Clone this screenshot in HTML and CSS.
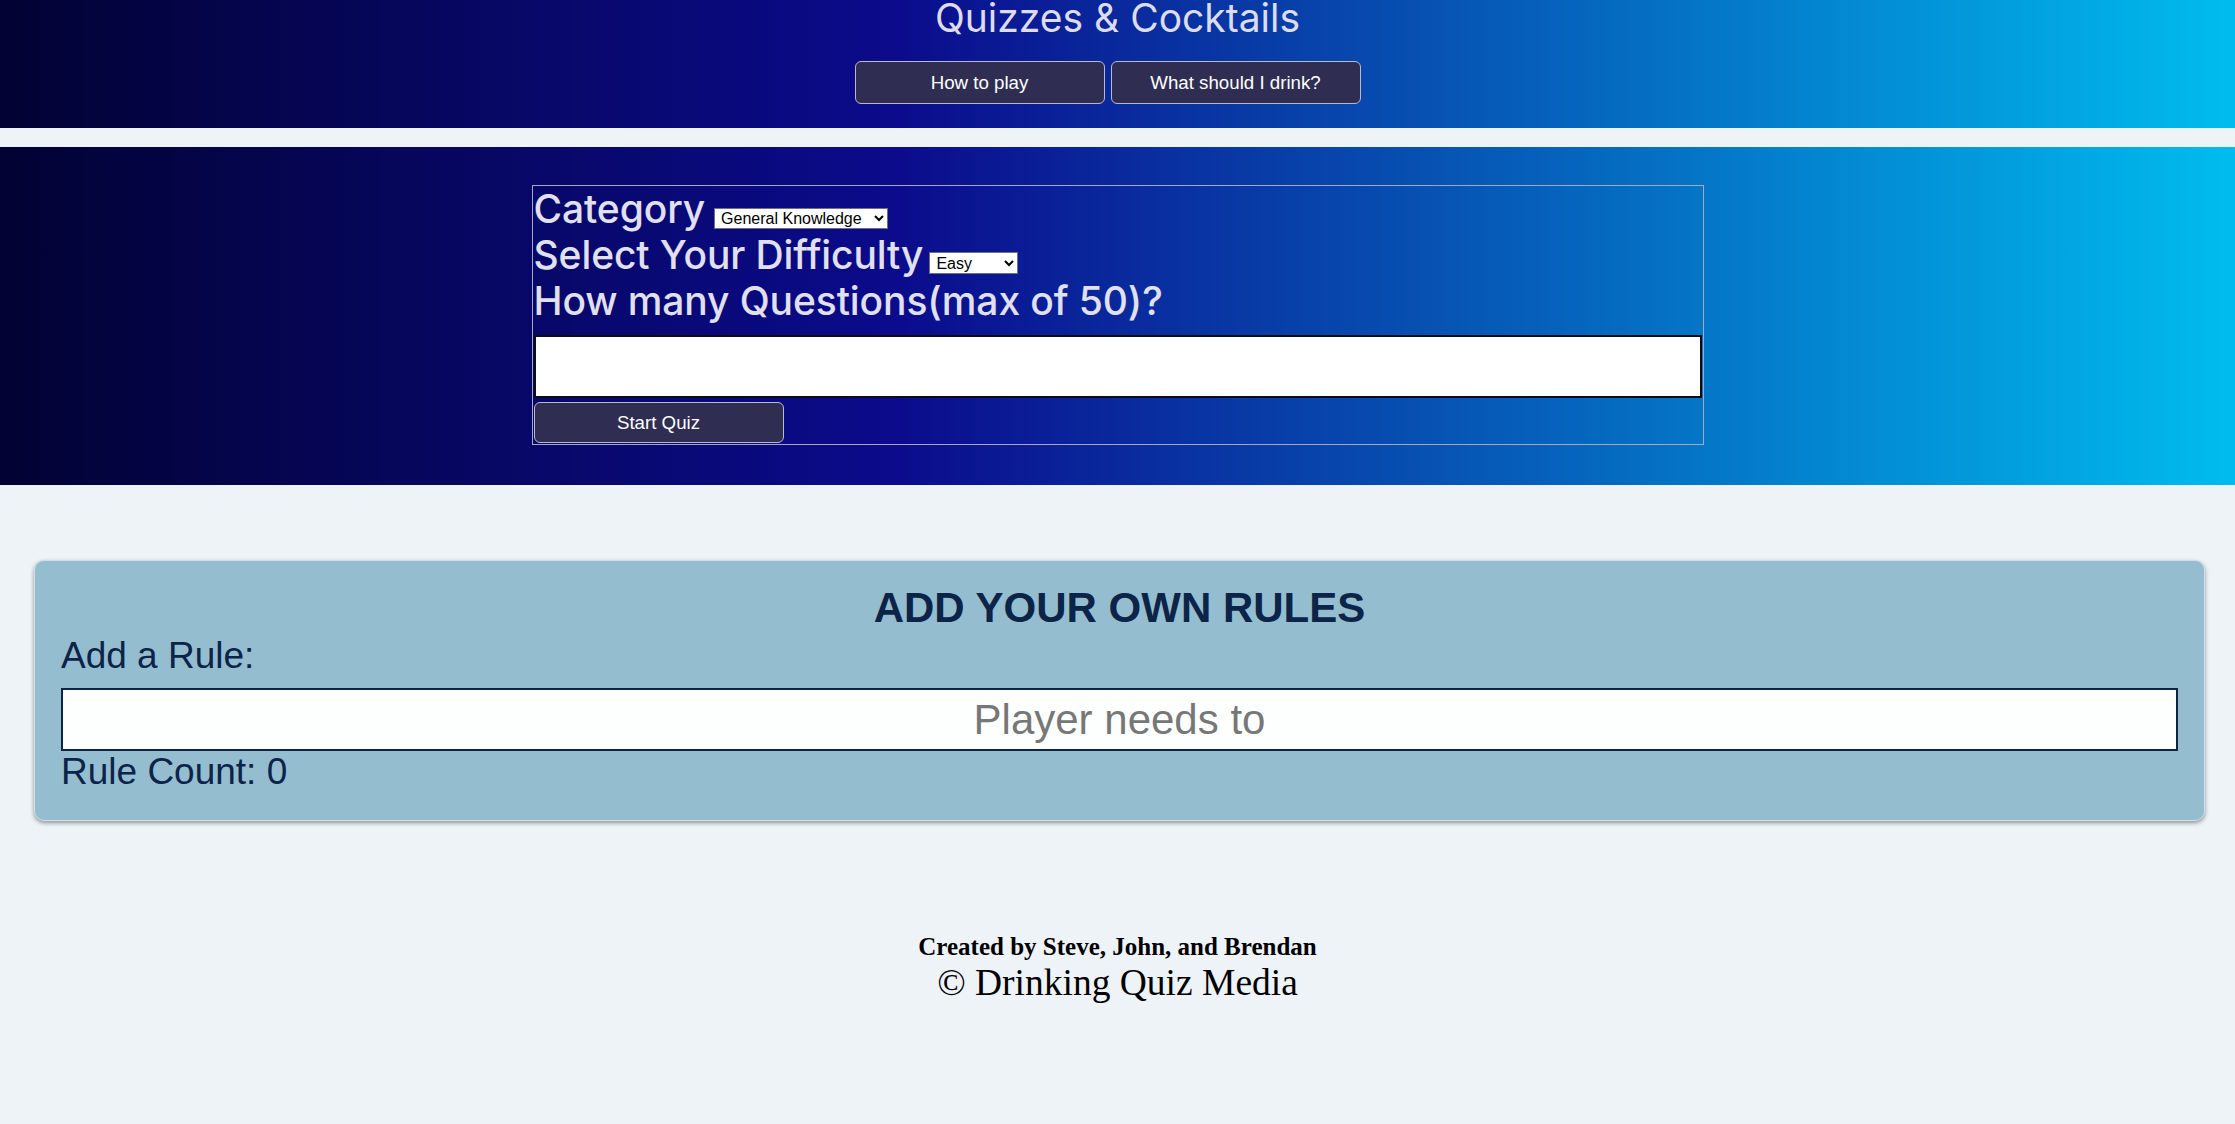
FILE: index.html
```html
<!DOCTYPE html>
<html lang="en">
<head>
<meta charset="utf-8">
<title>Quizzes &amp; Cocktails</title>
<link rel="stylesheet" href="styles.css">
</head>
<body>
<header class="top-band">
  <h1 class="site-title">Quizzes &amp; Cocktails</h1>
  <nav class="top-nav">
    <button class="btn btn-nav" type="button">How to play</button>
    <button class="btn btn-nav" type="button">What should I drink?</button>
  </nav>
</header>

<section class="quiz-band">
  <form class="quiz-form">
    <div class="form-line">
      <label class="form-label" for="cat">Category</label>
      <select class="sel sel-cat" id="cat"><option>General Knowledge</option></select>
    </div>
    <div class="form-line">
      <label class="form-label" for="diff">Select Your Difficulty</label>
      <select class="sel sel-diff" id="diff"><option>Easy</option></select>
    </div>
    <div class="form-line">
      <label class="form-label" for="num">How many Questions(max of 50)?</label>
    </div>
    <input class="num-input" id="num" type="text">
    <button class="btn btn-start" type="button">Start Quiz</button>
  </form>
</section>

<main class="rules-wrap">
  <section class="rules-card">
    <h2 class="rules-title">ADD YOUR OWN RULES</h2>
    <label class="rules-label" for="rule">Add a Rule:</label>
    <input class="rule-input" id="rule" type="text" placeholder="Player needs to">
    <p class="rule-count">Rule Count: 0</p>
  </section>
</main>

<footer class="site-footer">
  <h4 class="credits">Created by Steve, John, and Brendan</h4>
  <p class="copyright">© Drinking Quiz Media</p>
</footer>
</body>
</html>
```

FILE: styles.css
```css
html, body {
  margin: 0;
  padding: 0;
}

body {
  background: #eef3f8;
  font-family: "Liberation Serif", "Times New Roman", serif;
}

.top-band,
.quiz-band {
  background: linear-gradient(to right, #020234 0%, #0b0b8c 40%, #00bcee 100%);
}

/* ---------- header ---------- */
.top-band {
  height: 128px;
  display: flex;
  flex-direction: column;
  align-items: center;
}

.site-title {
  margin: 0;
  font-family: Inter, "Noto Sans", sans-serif;
  font-weight: 400;
  font-size: 39px;
  line-height: 35px;
  color: #dcdcec;
}

.top-nav {
  margin-top: 26px;
  display: flex;
  gap: 6px;
  padding-right: 20px;
}

.btn {
  background: #2f2e52;
  color: #ffffff;
  border: 1px solid #b9b9cc;
  border-radius: 6px;
  font-family: "Liberation Sans", Arial, sans-serif;
  font-size: 18.7px;
  width: 250px;
  height: 43px;
  padding: 0;
  cursor: pointer;
}

/* ---------- quiz form ---------- */
.quiz-band {
  margin-top: 19px;
  padding: 38px 0 40px;
}

.quiz-form {
  width: 1170px;
  margin: 0 auto;
  border: 1px solid #a7a7bd;
  display: flex;
  flex-direction: column;
  align-items: flex-start;
}

.form-line {
  height: 46px;
  display: flex;
  align-items: flex-start;
  padding-left: 1px;
}

.form-label {
  font-family: Inter, "Noto Sans", sans-serif;
  font-weight: 500;
  font-size: 39px;
  line-height: 45px;
  letter-spacing: -0.1px;
  color: #e0e0ee;
}

.sel {
  align-self: flex-end;
  margin-left: 9px;
  margin-bottom: 3px;
  height: 21px;
  padding: 0 0 0 2px;
  font-family: "Liberation Sans", Arial, sans-serif;
  font-size: 16px;
  background: #ffffff;
  color: #000000;
  border: 1px solid #6f6f7a;
  border-radius: 0;
}

.sel-cat {
  width: 174px;
}

.sel-diff {
  width: 89px;
  height: 22px;
  margin-bottom: 4px;
  margin-left: 6px;
}

.num-input {
  box-sizing: border-box;
  margin: 11px 1px 0;
  width: 1168px;
  height: 63px;
  border: 2px solid #0b0b1e;
  background: #ffffff;
  font-size: 24px;
}

.btn-start {
  margin: 4px 0 1px 1px;
  height: 41px;
}

/* ---------- rules card ---------- */
.rules-wrap {
  padding: 75px 30px 0 34px;
}

.rules-card {
  box-sizing: border-box;
  height: 261px;
  background: #95bdd0;
  border: 1px solid #cfe0ea;
  border-radius: 10px;
  box-shadow: 0 2px 4px rgba(0, 0, 0, 0.4);
  padding: 23px 26px 0;
  display: flex;
  flex-direction: column;
  color: #0b2447;
  font-family: "Liberation Sans", Arial, sans-serif;
}

.rules-title {
  margin: 0;
  text-align: center;
  font-size: 42px;
  line-height: 48px;
  font-weight: 700;
}

.rules-label {
  margin-top: 3px;
  font-size: 37px;
  line-height: 42px;
}

.rule-input {
  box-sizing: border-box;
  margin-top: 11px;
  width: 100%;
  height: 63px;
  border: 2px solid #0b2447;
  background: #fdfffe;
  text-align: center;
  font-family: "Liberation Sans", Arial, sans-serif;
  font-size: 42px;
  color: #0b2447;
}

.rule-input::placeholder {
  color: #777777;
}

.rule-count {
  margin: 0;
  font-size: 37px;
  line-height: 42px;
}

/* ---------- footer ---------- */
.site-footer {
  margin-top: 111px;
  text-align: center;
  color: #000000;
}

.credits {
  margin: 0;
  font-size: 25px;
  line-height: 29px;
  font-weight: 700;
}

.copyright {
  margin: 0;
  font-size: 37.5px;
  line-height: 43px;
}
```
